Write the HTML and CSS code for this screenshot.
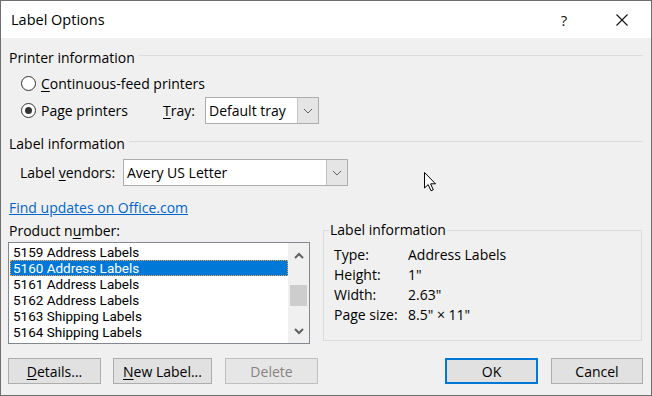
FILE: index.html
```html
<!DOCTYPE html>
<html lang="en">
<head>
    <meta charset="UTF-8">
    <title>Label Options</title>
    <link rel="stylesheet" href="styles.css">
</head>
<body>
    <div class="window">
        <div class="titlebar">
            <div class="title">Label Options</div>
            <div class="title-buttons">
                <div class="title-btn">?</div>
                <div class="title-btn">
                    <svg width="12" height="12" viewBox="0 0 12 12"><path d="M0.5 0.5 L11.5 11.5 M11.5 0.5 L0.5 11.5" stroke="#111" stroke-width="1.1" fill="none"/></svg>
                </div>
            </div>
        </div>

        <div class="content">
            <div class="group-header">Printer information</div>

            <div class="radio-row first">
                <label class="radio"><span class="circle"></span><span><u>C</u>ontinuous-feed printers</span></label>
            </div>
            <div class="radio-row">
                <label class="radio tray-radio"><span class="circle checked"></span><span>Pa<u>g</u>e printers</span></label>
                <span class="tray-label"><u>T</u>ray:</span>
                <div class="combo tray-combo">
                    <span class="combo-text">Default tray</span>
                    <span class="combo-btn"><svg width="10" height="6" viewBox="0 0 10 6"><path d="M1 1 L5 5 L9 1" stroke="#606060" stroke-width="1" fill="none"/></svg></span>
                </div>
            </div>

            <div class="group-header second">Label information</div>

            <div class="vendor-row">
                <span class="vendor-label">Label <u>v</u>endors:</span>
                <div class="combo vendor-combo">
                    <span class="combo-text">Avery US Letter</span>
                    <span class="combo-btn"><svg width="10" height="6" viewBox="0 0 10 6"><path d="M1 1 L5 5 L9 1" stroke="#606060" stroke-width="1" fill="none"/></svg></span>
                </div>
            </div>

            <a class="link">Find updates on Office.com</a>

            <div class="lower">
                <div class="product-col">
                    <div class="product-label">Product n<u>u</u>mber:</div>
                    <div class="listbox">
                        <div class="list-items">
                            <div class="item">5159 Address Labels</div>
                            <div class="item selected">5160 Address Labels</div>
                            <div class="item">5161 Address Labels</div>
                            <div class="item">5162 Address Labels</div>
                            <div class="item">5163 Shipping Labels</div>
                            <div class="item">5164 Shipping Labels</div>
                        </div>
                        <div class="scrollbar">
                            <svg width="10" height="7" viewBox="0 0 10 7"><path d="M1 6 L5 2 L9 6" stroke="#606060" stroke-width="2" fill="none"/></svg>
                            <div class="thumb"></div>
                            <svg width="10" height="7" viewBox="0 0 10 7"><path d="M1 1 L5 5 L9 1" stroke="#606060" stroke-width="2" fill="none"/></svg>
                        </div>
                    </div>
                </div>

                <fieldset class="info-box">
                    <legend>Label information</legend>
                    <div class="info-row"><span class="info-key">Type:</span><span>Address Labels</span></div>
                    <div class="info-row"><span class="info-key">Height:</span><span>1"</span></div>
                    <div class="info-row"><span class="info-key">Width:</span><span>2.63"</span></div>
                    <div class="info-row"><span class="info-key">Page size:</span><span>8.5" × 11"</span></div>
                </fieldset>
            </div>

            <div class="button-row">
                <div class="btn details"><u>D</u>etails...</div>
                <div class="btn new-label"><u>N</u>ew Label...</div>
                <div class="btn delete disabled">Delete</div>
                <div class="spacer"></div>
                <div class="btn ok">OK</div>
                <div class="btn cancel">Cancel</div>
            </div>
        </div>

        <svg class="cursor" width="13" height="20" viewBox="0 0 13 20">
            <path d="M0.5 0.5 L0.5 16 L4.2 12.6 L7 18.8 L9.3 17.8 L6.6 11.8 L11.5 11.8 Z" fill="#fff" stroke="#000" stroke-width="1" stroke-linejoin="miter"/>
        </svg>
    </div>
</body>
</html>
```

FILE: styles.css
```css
* {
    box-sizing: border-box;
}

body {
    margin: 0;
    font-family: 'Open Sans', 'Noto Sans', sans-serif;
    font-size: 14px;
    color: #000;
    background: #f0f0f0;
}

u {
    text-decoration-thickness: 1px;
    text-underline-offset: 2px;
}

.window {
    position: relative;
    width: 652px;
    height: 396px;
    border: 1px solid #6f6f6f;
    background: #f0f0f0;
    display: flex;
    flex-direction: column;
}

.titlebar {
    height: 37px;
    background: #fff;
    display: flex;
    align-items: center;
    justify-content: space-between;
    padding-left: 10px;
}

.title {
    font-size: 14.5px;
    color: #000;
}

.title-buttons {
    display: flex;
    height: 100%;
}

.title-btn {
    width: 58px;
    height: 100%;
    display: flex;
    align-items: center;
    justify-content: center;
    font-size: 15px;
    color: #111;
}

.content {
    padding: 0 8px 0 7px;
    display: flex;
    flex-direction: column;
}

.group-header {
    display: flex;
    align-items: center;
    height: 20px;
    margin-top: 9px;
    padding-left: 1px;
}

.group-header::after {
    content: "";
    flex: 1;
    height: 1px;
    background: #dcdcdc;
    margin-left: 4px;
    margin-top: -3px;
}

.radio-row {
    display: flex;
    align-items: center;
    height: 27px;
}

.radio-row.first {
    margin-top: 3px;
}

.radio {
    display: flex;
    align-items: center;
    gap: 5px;
    margin-left: 13px;
}

.tray-radio {
    width: 142px;
}

.circle {
    width: 15px;
    height: 15px;
    border: 1px solid #333;
    border-radius: 50%;
    background: #fff;
    display: flex;
    align-items: center;
    justify-content: center;
}

.circle.checked::after {
    content: "";
    width: 7px;
    height: 7px;
    border-radius: 50%;
    background: #333;
}

.tray-label {
    width: 42px;
}

.combo {
    height: 27px;
    border: 1px solid #adadad;
    background: #fff;
    display: flex;
    align-items: center;
}

.combo-text {
    flex: 1;
    padding-left: 3px;
}

.combo-btn {
    width: 21px;
    height: 100%;
    background: #e5e5e5;
    border-left: 1px solid #c4c4c4;
    display: flex;
    align-items: center;
    justify-content: center;
}

.tray-combo {
    width: 114px;
}

.second {
    margin-top: 9px;
}

.vendor-row {
    display: flex;
    align-items: center;
    margin-top: 6px;
}

.vendor-label {
    width: 115px;
    padding-left: 12px;
}

.vendor-combo {
    width: 225px;
}

.link {
    margin-top: 12px;
    height: 20px;
    line-height: 20px;
    color: #0066cc;
    text-decoration: underline;
    padding-left: 1px;
    align-self: flex-start;
}

.lower {
    display: flex;
    gap: 13px;
    margin-top: 2px;
}

.product-col {
    width: 302px;
    padding-top: 1px;
}

.product-label {
    height: 20px;
    line-height: 20px;
    padding-left: 1px;
}

.listbox {
    margin-top: 1px;
    height: 102px;
    border: 1px solid #828790;
    background: #fff;
    display: flex;
}

.list-items {
    flex: 1;
    padding: 1px 0 0 1px;
}

.item {
    height: 16px;
    line-height: 16px;
    padding-left: 3px;
    white-space: nowrap;
    font-family: Roboto, 'Open Sans', sans-serif;
    font-size: 13.5px;
}

.item.selected {
    background: #0078d7;
    color: #fff;
    outline: 1px dotted #f2a14a;
    outline-offset: -1px;
}

.scrollbar {
    width: 21px;
    background: #f0f0f0;
    display: flex;
    flex-direction: column;
    align-items: center;
    justify-content: space-between;
    padding: 9px 0 8px;
}

.thumb {
    width: 17px;
    height: 21px;
    background: #cdcdcd;
    margin-top: 4px;
}

.info-box {
    width: 319px;
    height: 121px;
    margin: 0;
    padding: 5px 10px 0 10px;
    border: 1px solid #dcdcdc;
}

.info-box legend {
    padding: 0 1px;
    margin-left: -5px;
    line-height: 20px;
}

.info-row {
    display: flex;
    height: 20px;
    line-height: 20px;
}

.info-key {
    width: 74px;
}

.button-row {
    display: flex;
    margin-top: 14px;
    gap: 12px;
}

.btn {
    width: 93px;
    height: 26px;
    border: 1px solid #adadad;
    background: #e1e1e1;
    display: flex;
    align-items: center;
    justify-content: center;
}

.new-label {
    width: 99px;
}

.delete {
    margin-left: 1px;
}

.disabled {
    color: #838383;
    border-color: #bfbfbf;
    background: #e6e6e6;
}

.spacer {
    flex: 1;
}

.ok {
    border: 2px solid #0078d7;
}

.cancel {
    width: 92px;
    margin-left: 1px;
}

.cursor {
    position: absolute;
    left: 423px;
    top: 171px;
}
```
